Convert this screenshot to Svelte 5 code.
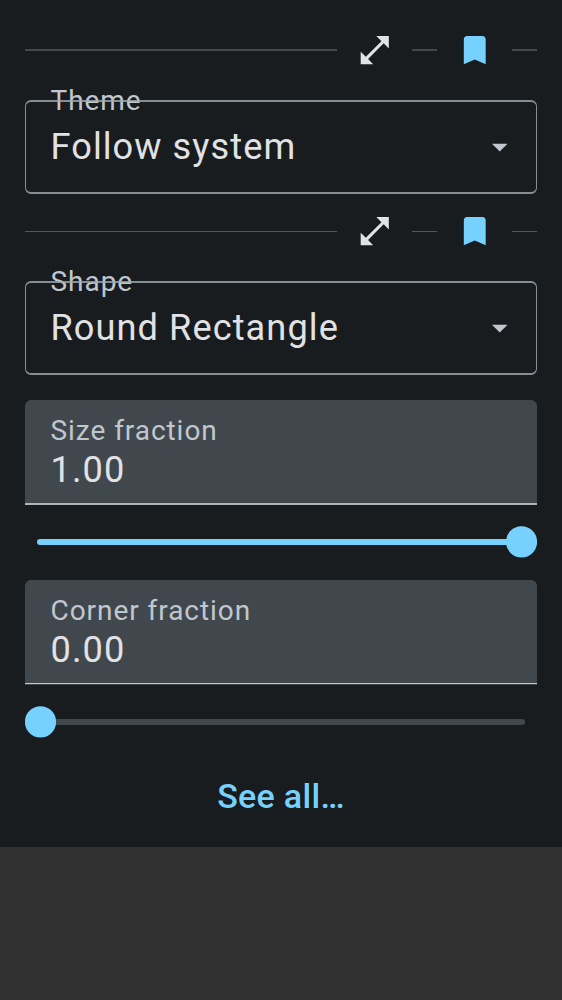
<script>
  const choices = [
    { label: 'Theme', value: 'Follow system' },
    { label: 'Shape', value: 'Round Rectangle' },
  ];
  const fractions = [
    { label: 'Size fraction', value: 1 },
    { label: 'Corner fraction', value: 0 },
  ];
</script>

<main class="panel">
  {#each choices as choice, i}
    <section class="choice" class:second={i === 1}>
      <div class="tools">
        <span class="rule grow"></span>
        <button class="icon" aria-label="Expand">
          <svg viewBox="0 -0.2 24 24"><path fill="#e1e2e5" d="M21 11V3h-8l3.29 3.29-10 10L3 13v8h8l-3.29-3.29 10-10z" /></svg>
        </button>
        <span class="rule"></span>
        <button class="icon" aria-label="Bookmark">
          <svg viewBox="0 -0.2 24 24"><path fill="#77d1ff" d="M17 3H7c-1.1 0-1.99.9-1.99 2L5 21l7-3 7 3V5c0-1.1-.9-2-2-2z" /></svg>
        </button>
        <span class="rule"></span>
      </div>
      <div class="outlined">
        <span class="label floating">{choice.label}</span>
        <span class="value">{choice.value}</span>
        <svg class="arrow" viewBox="0 0 24 24"><path fill="#c0c7cf" d="M7 10l5 5 5-5z" /></svg>
      </div>
    </section>
  {/each}
  {#each fractions as item, i}
    <section class="fraction" class:second={i === 1}>
      <div class="filled">
        <span class="label">{item.label}</span>
        <span class="value">{item.value.toFixed(2)}</span>
      </div>
      <div class="slider">
        <div class="track"><div class="active" style="width: {item.value * 100}%"></div></div>
        <svg class="thumb" viewBox="0 0 31 32" style="left: calc((100% - 31px) * {item.value})">
          <circle cx="15.5" cy="15.9" r="15.6" fill="#77d1ff" />
        </svg>
      </div>
    </section>
  {/each}
  <button class="all">See all…</button>
</main>

<style>
  :global(body) {
    margin: 0;
    background: #303030;
    font-family: Roboto, sans-serif;
  }
  .panel {
    box-sizing: border-box;
    height: 847px;
    padding: 25px 25px 0;
    background: #191c1e;
    color: #e1e2e5;
  }
  button {
    border: 0;
    padding: 0;
    background: none;
    font-family: inherit;
  }
  .choice {
    height: 181px;
  }
  .tools {
    display: flex;
    align-items: center;
    gap: 12.5px;
    height: 50px;
  }
  .rule {
    width: 25px;
    height: 2px;
    background: #44484b;
  }
  .second .rule {
    height: 1px;
    margin-top: 1px;
    background: #54575a;
  }
  .rule.grow {
    flex: 1;
  }
  .icon {
    display: grid;
    place-items: center;
    width: 50px;
    height: 50px;
  }
  .icon svg,
  .arrow {
    display: block;
    width: 37.5px;
    height: 37.5px;
  }
  .outlined {
    position: relative;
    box-sizing: border-box;
    display: flex;
    align-items: center;
    justify-content: space-between;
    height: 94px;
    margin-top: 25px;
    padding: 0 19px 0 25.5px;
  }
  .outlined::after {
    content: '';
    position: absolute;
    inset: 0;
    border: 1.6px solid rgba(161, 170, 176, 0.8);
    border-width: 2px 1.6px;
    border-radius: 6px;
  }
  .label {
    color: #c0c7cf;
    font-size: 28px;
    line-height: 32px;
    letter-spacing: 0.95px;
  }
  .value {
    font-size: 36.2px;
    line-height: 44px;
    letter-spacing: 1.06px;
  }
  .floating {
    position: absolute;
    left: 25.5px;
    top: -15px;
  }
  .fraction {
    height: 180px;
  }
  .fraction:nth-of-type(3) {
    margin-top: 13px;
  }
  .filled {
    box-sizing: border-box;
    display: flex;
    flex-direction: column;
    height: 105px;
    padding: 15px 25.5px 0;
    border-bottom: 2px solid #adb4ba;
    border-radius: 6px 6px 0 0;
    background: #41484d;
  }
  .second .filled {
    height: 104px;
    margin-bottom: 22px;
    border-bottom: 1px solid #c0c7cf;
    box-shadow: 0 1px #41484d;
  }
  .filled .value {
    margin-top: 1px;
  }
  .slider {
    position: relative;
    display: flex;
    align-items: center;
    height: 32px;
    margin-top: 21px;
    padding: 0 12.5px 0 12px;
  }
  .track {
    flex: 1;
    height: 6px;
    border-radius: 3px;
    overflow: hidden;
    background: #41484d;
  }
  .active {
    height: 100%;
    background: #77d1ff;
  }
  .thumb {
    position: absolute;
    top: 0;
    width: 31px;
    height: 32px;
  }
  .all {
    display: block;
    margin: 11px auto 0;
    height: 50px;
    color: #77d1ff;
    font-size: 34px;
    font-weight: 500;
    line-height: 50px;
    letter-spacing: 0.3px;
  }
</style>
